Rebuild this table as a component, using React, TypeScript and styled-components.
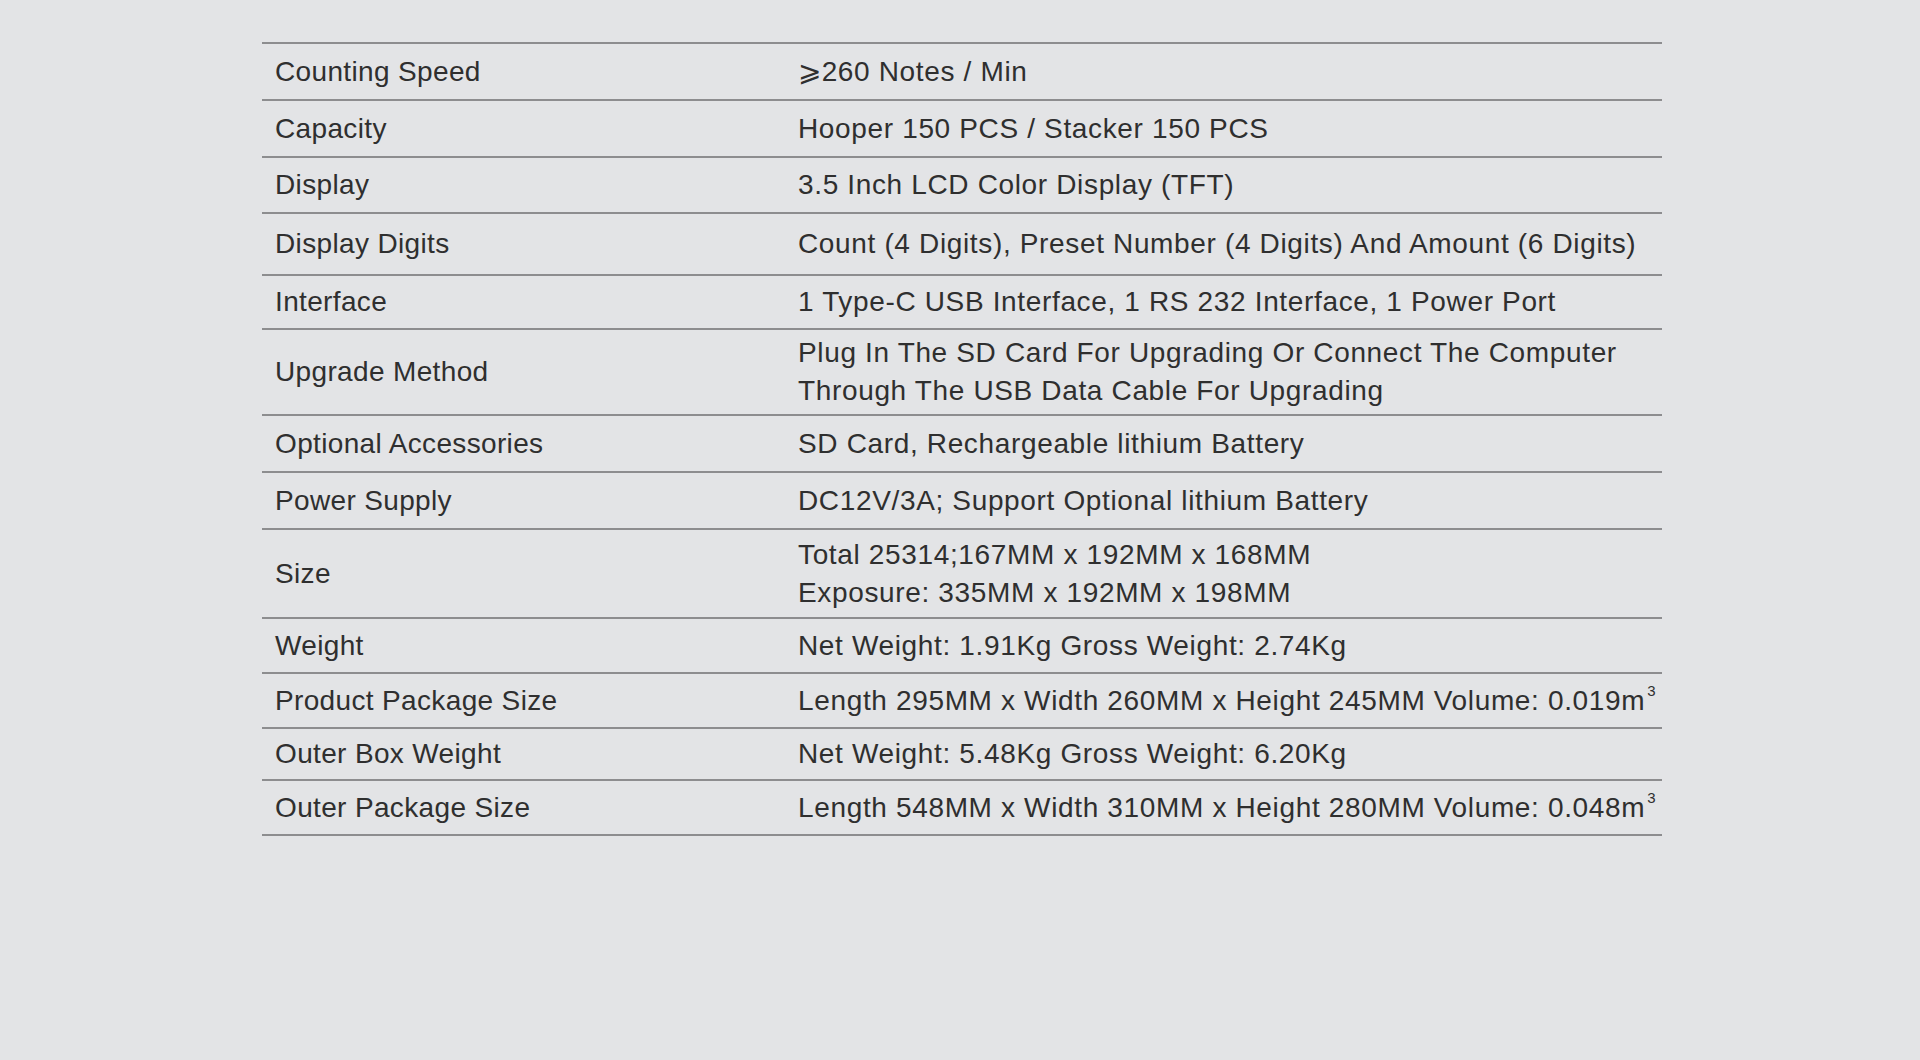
import React from 'react';
import styled, { createGlobalStyle } from 'styled-components';

const GlobalStyle = createGlobalStyle`
  html, body {
    margin: 0;
    padding: 0;
    background: #e3e4e6;
  }
  body {
    font-family: "Liberation Sans", Arial, sans-serif;
    color: #2f2f2f;
  }
`;

const Page = styled.div`
  min-height: 1060px;
  padding-top: 42px;
  box-sizing: border-box;
`;

const Table = styled.div`
  width: 1400px;
  margin-left: 262px;
  border-top: 2px solid #8d8d8f;
`;

const Row = styled.div<{ $h: number }>`
  display: grid;
  grid-template-columns: 536px 1fr;
  align-items: center;
  height: ${(p) => p.$h}px;
  border-bottom: 2px solid #8d8d8f;
  box-sizing: border-box;
`;

const Label = styled.div`
  padding-left: 13px;
  font-size: 28px;
  line-height: 38px;
  letter-spacing: 0.35px;
  white-space: nowrap;
`;

const Value = styled.div`
  font-size: 28px;
  line-height: 38px;
  letter-spacing: 0.65px;
  white-space: nowrap;
`;

const Sup = styled.sup`
  font-size: 15px;
  line-height: 0;
  vertical-align: 14px;
  margin-left: 2px;
  letter-spacing: 0;
`;

type Spec = { label: string; value: React.ReactNode; h: number };

const specs: Spec[] = [
  { label: 'Counting Speed', value: '⩾260 Notes / Min', h: 57 },
  { label: 'Capacity', value: 'Hooper 150 PCS / Stacker 150 PCS', h: 57 },
  { label: 'Display', value: '3.5 Inch LCD Color Display (TFT)', h: 56 },
  {
    label: 'Display Digits',
    value: 'Count (4 Digits), Preset Number (4 Digits) And Amount (6 Digits)',
    h: 62,
  },
  {
    label: 'Interface',
    value: '1 Type-C USB Interface, 1 RS 232 Interface, 1 Power Port',
    h: 54,
  },
  {
    label: 'Upgrade Method',
    value: (
      <>
        Plug In The SD Card For Upgrading Or Connect The Computer
        <br />
        Through The USB Data Cable For Upgrading
      </>
    ),
    h: 86,
  },
  { label: 'Optional Accessories', value: 'SD Card, Rechargeable lithium Battery', h: 57 },
  { label: 'Power Supply', value: 'DC12V/3A; Support Optional lithium Battery', h: 57 },
  {
    label: 'Size',
    value: (
      <>
        Total 25314;167MM x 192MM x 168MM
        <br />
        Exposure: 335MM x 192MM x 198MM
      </>
    ),
    h: 89,
  },
  { label: 'Weight', value: 'Net Weight: 1.91Kg Gross Weight: 2.74Kg', h: 55 },
  {
    label: 'Product Package Size',
    value: (
      <>
        Length 295MM x Width 260MM x Height 245MM Volume: 0.019m<Sup>3</Sup>
      </>
    ),
    h: 55,
  },
  { label: 'Outer Box Weight', value: 'Net Weight: 5.48Kg Gross Weight: 6.20Kg', h: 52 },
  {
    label: 'Outer Package Size',
    value: (
      <>
        Length 548MM x Width 310MM x Height 280MM Volume: 0.048m<Sup>3</Sup>
      </>
    ),
    h: 55,
  },
];

export default function App() {
  return (
    <Page>
      <GlobalStyle />
      <Table>
        {specs.map((s) => (
          <Row key={s.label} $h={s.h}>
            <Label>{s.label}</Label>
            <Value>{s.value}</Value>
          </Row>
        ))}
      </Table>
    </Page>
  );
}
